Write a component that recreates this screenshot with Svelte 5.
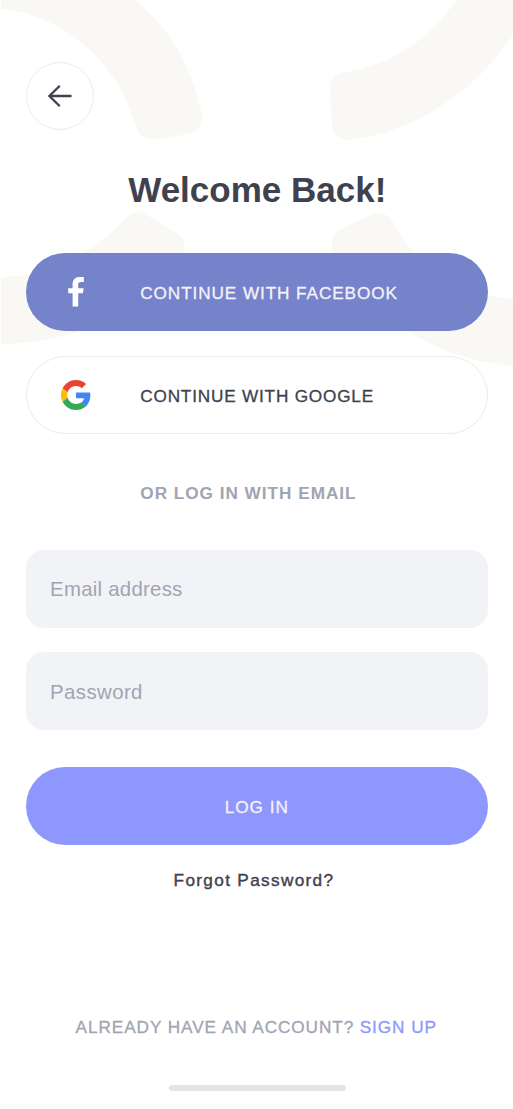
<script>
  let email = $state('');
  let password = $state('');
</script>

<main class="screen">
  <svg class="backdrop" width="513" height="380" viewBox="0 0 513 380" fill="#FAF8F5" aria-hidden="true">
    <path d="M1 0H135C172 29 193 71 202 114C203.500 124 197 132.500 189 134L155 139.600C146 141 138.500 134.500 136 127C120 66 67 16 1 8.500Z" />
    <path d="M456 0C431 38 392 65 344 72.500C335 73.500 329.500 81 330 89L332 125C332.500 134 340 140.500 349 139.700C417 132 477 89 513 35V0Z" />
    <path d="M1 277C49 276 92 255 126 218C131 212 139 210.500 146 214.500L176 233C183 237.500 185.500 243 184 253C165 306 75 344 1 344Z" />
    <path d="M333 253C330 243 332 233 341 229L371 215C380 211 389 214 393 222C419 270 460 297 513 298.500V366C475 363 438 350 408 331C370 309 343 285 333 253Z" />
  </svg>

  <button class="back" aria-label="Back">
    <svg width="26" height="24" viewBox="0 0 26 24" fill="none" stroke="#3F414E" stroke-width="2.300">
      <path d="M24.500 12H2.700M12.800 1.700L2.400 12L12.800 22.300" />
    </svg>
  </button>

  <h1>Welcome Back!</h1>

  <button class="pill facebook">
    <svg class="logo" width="30" height="30" viewBox="0 0 30 30" fill="#fff" aria-hidden="true">
      <path d="M11.600 29.500V16.200H7.200V11.200H11.600V7.600C11.600 2.600 14.200 0 18.600 0H22.800V5H20C17.700 5 17.200 6 17.200 7.700V11.200H22.600L21.900 16.200H17.200V29.500Z" />
    </svg>
    <span>CONTINUE WITH FACEBOOK</span>
  </button>

  <button class="pill google">
    <svg class="logo" width="30" height="30" viewBox="0 0 48 48" aria-hidden="true">
      <path fill="#EA4335" d="M24 9.500c3.540 0 6.710 1.220 9.210 3.600l6.850-6.850C35.900 2.380 30.470 0 24 0 14.620 0 6.510 5.380 2.560 13.220l7.980 6.190C12.430 13.720 17.740 9.500 24 9.500z" />
      <path fill="#4285F4" d="M46.980 24.550c0-1.570-.15-3.090-.38-4.550H24v9.020h12.940c-.58 2.960-2.260 5.480-4.780 7.180l7.730 6c4.510-4.180 7.090-10.360 7.090-17.650z" />
      <path fill="#FBBC05" d="M10.530 28.590c-.48-1.450-.76-2.990-.76-4.590s.27-3.140.76-4.590l-7.980-6.190C.92 16.460 0 20.120 0 24c0 3.880.92 7.540 2.560 10.780l7.970-6.190z" />
      <path fill="#34A853" d="M24 48c6.480 0 11.930-2.130 15.890-5.810l-7.730-6c-2.150 1.450-4.920 2.300-8.160 2.300-6.260 0-11.570-4.220-13.470-9.910l-7.980 6.190C6.510 42.620 14.620 48 24 48z" />
    </svg>
    <span>CONTINUE WITH GOOGLE</span>
  </button>

  <p class="divider">OR LOG IN WITH EMAIL</p>

  <input class="email" type="email" placeholder="Email address" bind:value={email} />
  <input class="password" type="password" placeholder="Password" bind:value={password} />

  <button class="pill login"><span>LOG IN</span></button>
  <a class="forgot" href="#forgot">Forgot Password?</a>

  <p class="signup"><span>ALREADY HAVE AN ACCOUNT?</span><a href="#signup">SIGN UP</a></p>

  <div class="home"></div>
</main>

<style>
  :global(body) { background: #fff; }
  .screen {
    position: relative;
    box-sizing: border-box;
    width: 513px;
    height: 1109px;
    padding: 62px 25px 0 25.600px;
    overflow: hidden;
    display: flex;
    flex-direction: column;
    font-family: "Liberation Sans", Arial, sans-serif;
    font-size: 17.200px;
    color: #3f414e;
    background: #fff;
  }
  .screen > * { flex-shrink: 0; }
  .backdrop { position: absolute; top: 0; left: 0; }
  button, input { font: inherit; border: 0; margin: 0; padding: 0; box-sizing: border-box; }
  a { color: inherit; text-decoration: none; }
  .back {
    position: relative;
    width: 68px;
    height: 68px;
    border: 1.200px solid #ebeaec;
    border-radius: 50%;
    background: #fff;
    display: flex;
    align-items: center;
    justify-content: center;
    color: #3f414e;
  }
  h1 {
    position: relative;
    margin: 40px 0 0 1px;
    font-size: 35px;
    line-height: 40px;
    font-weight: 700;
    text-align: center;
  }
  .pill {
    position: relative;
    height: 78px;
    border-radius: 39px;
    display: flex;
    align-items: center;
    -webkit-text-stroke: 0.300px currentColor;
  }
  .pill span { white-space: nowrap; line-height: 20px; padding-top: 2px; }
  .logo { margin: 0 48.800px 0 35.900px; }
  .facebook { margin-top: 43px; background: #7583ca; color: #f6f1fb; letter-spacing: 0.900px; }
  .facebook .logo { margin-left: 35.400px; margin-right: 49.300px; }
  .google {
    margin-top: 24.500px;
    border: 1.200px solid #ebeaec;
    background: #fff;
    color: #3f414e;
    letter-spacing: 0.800px;
  }
  .google .logo { margin-left: 34.900px; }
  .divider {
    margin: 49.500px 0 0 114.700px;
    line-height: 20px;
    font-weight: 700;
    color: #a1a4b2;
    letter-spacing: 0.980px;
  }
  input {
    height: 78px;
    padding: 2px 24.500px 0;
    border-radius: 18px;
    background: #f2f3f7;
    font-size: 20.400px;
    color: #3f414e;
    outline: none;
  }
  input::placeholder { color: #a1a4b2; opacity: 1; }
  .email { margin-top: 46.500px; letter-spacing: 0.250px; }
  .password { margin-top: 24.700px; letter-spacing: 0.400px; }
  .login {
    margin-top: 37.300px;
    justify-content: center;
    background: #8e97fd;
    color: #f6f1fb;
    letter-spacing: 1px;
  }
  .forgot {
    margin: 25px 0 0 148px;
    line-height: 20px;
    letter-spacing: 1.330px;
    -webkit-text-stroke: 0.400px currentColor;
  }
  .signup {
    display: flex;
    gap: 5.500px;
    margin: 126.500px 0 0 50px;
    line-height: 20px;
    white-space: nowrap;
    color: #a1a4b2;
    letter-spacing: 0.930px;
    -webkit-text-stroke: 0.300px currentColor;
  }
  .signup a { color: #8e97fd; letter-spacing: 0.930px; }
  .home {
    width: 177px;
    height: 6px;
    margin: 48px 0 0 143.400px;
    border-radius: 3px;
    background: #e5e5e5;
  }
</style>
